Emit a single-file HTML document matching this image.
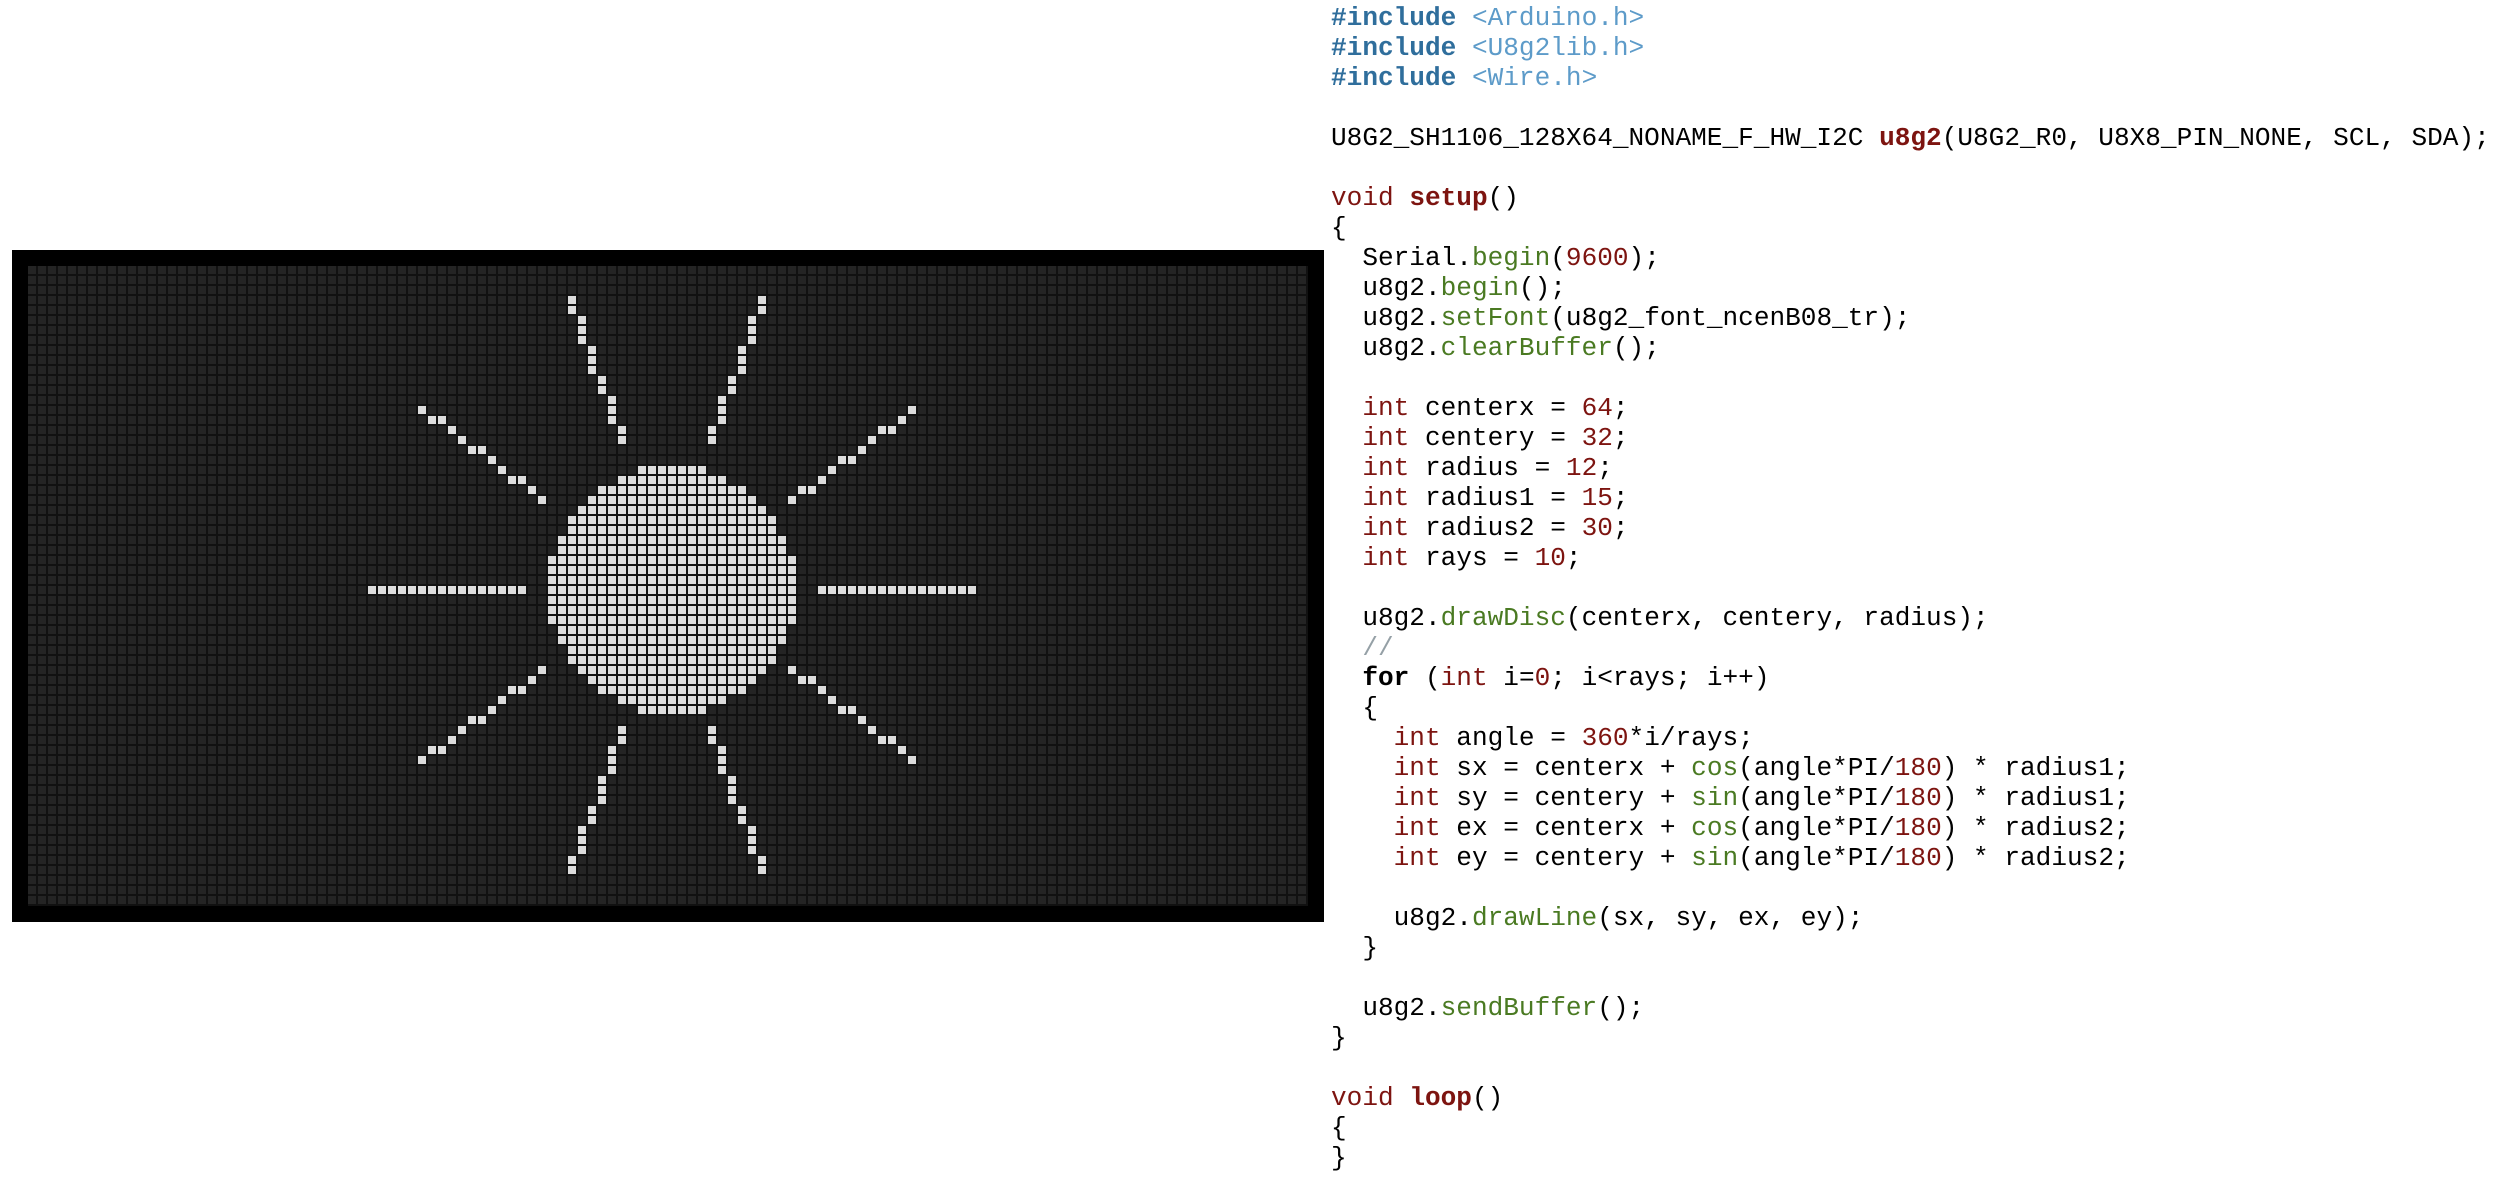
<!DOCTYPE html>
<html><head><meta charset="utf-8">
<style>
html,body{margin:0;padding:0;background:#fff;width:2494px;height:1180px;overflow:hidden;position:relative}
#oled{position:absolute;left:12px;top:250px;width:1312px;height:672px;background:#000}
#grid{position:absolute;left:16px;top:16px;width:1280px;height:640px;
background:linear-gradient(90deg,transparent 8px,#111 8px) 0 0/10px 10px,linear-gradient(transparent 8px,#111 8px) 0 0/10px 10px,#242424;}
#grid i{position:absolute;width:8px;height:8px;background:#dcdcdc}
pre{position:absolute;left:1331px;top:3px;margin:0;font-family:"Liberation Mono",monospace;font-size:26.1px;line-height:30px;color:#000}
.inc{color:#2f6e9c;font-weight:bold}
.str{color:#5d9bc9}
.kw{color:#7d1410}
.kb{color:#7d1410;font-weight:bold}
.fn{color:#4a7a22}
.num{color:#7d1410}
.cm{color:#95a0a6}
b{font-weight:bold}
</style></head><body>
<div id="oled"><div id="grid"></div></div>
<pre><span class="inc">#include</span> <span class="str">&lt;Arduino.h&gt;</span>
<span class="inc">#include</span> <span class="str">&lt;U8g2lib.h&gt;</span>
<span class="inc">#include</span> <span class="str">&lt;Wire.h&gt;</span>

U8G2_SH1106_128X64_NONAME_F_HW_I2C <span class="kb">u8g2</span>(U8G2_R0, U8X8_PIN_NONE, SCL, SDA);

<span class="kw">void</span> <span class="kb">setup</span>()
{
  Serial.<span class="fn">begin</span>(<span class="num">9600</span>);
  u8g2.<span class="fn">begin</span>();
  u8g2.<span class="fn">setFont</span>(u8g2_font_ncenB08_tr);
  u8g2.<span class="fn">clearBuffer</span>();

  <span class="kw">int</span> centerx = <span class="num">64</span>;
  <span class="kw">int</span> centery = <span class="num">32</span>;
  <span class="kw">int</span> radius = <span class="num">12</span>;
  <span class="kw">int</span> radius1 = <span class="num">15</span>;
  <span class="kw">int</span> radius2 = <span class="num">30</span>;
  <span class="kw">int</span> rays = <span class="num">10</span>;

  u8g2.<span class="fn">drawDisc</span>(centerx, centery, radius);
  <span class="cm">//</span>
  <b>for</b> (<span class="kw">int</span> i=<span class="num">0</span>; i&lt;rays; i++)
  {
    <span class="kw">int</span> angle = <span class="num">360</span>*i/rays;
    <span class="kw">int</span> sx = centerx + <span class="fn">cos</span>(angle*PI/<span class="num">180</span>) * radius1;
    <span class="kw">int</span> sy = centery + <span class="fn">sin</span>(angle*PI/<span class="num">180</span>) * radius1;
    <span class="kw">int</span> ex = centerx + <span class="fn">cos</span>(angle*PI/<span class="num">180</span>) * radius2;
    <span class="kw">int</span> ey = centery + <span class="fn">sin</span>(angle*PI/<span class="num">180</span>) * radius2;

    u8g2.<span class="fn">drawLine</span>(sx, sy, ex, ey);
  }

  u8g2.<span class="fn">sendBuffer</span>();
}

<span class="kw">void</span> <span class="kb">loop</span>()
{
}</pre>
<script>
(function(){
var px={};
function P(x,y){if(x<0||x>127||y<0||y>63)return;px[x+','+y]=1;}
function V(x,y,h){for(var k=0;k<h;k++)P(x,y+k);}
function sec(x,y,x0,y0){V(x0+x,y0-y,y+1);V(x0+y,y0-x,x+1);V(x0-x,y0-y,y+1);V(x0-y,y0-x,x+1);
V(x0+x,y0,y+1);V(x0+y,y0,x+1);V(x0-x,y0,y+1);V(x0-y,y0,x+1);}
function disc(x0,y0,r){var f=1-r,ddx=1,ddy=-2*r,x=0,y=r;sec(x,y,x0,y0);
while(x<y){if(f>=0){y--;ddy+=2;f+=ddy;}x++;ddx+=2;f+=ddx;sec(x,y,x0,y0);}}
function line(x1,y1,x2,y2){var t,dx=Math.abs(x2-x1),dy=Math.abs(y2-y1),sw=0;
if(dy>dx){sw=1;t=dx;dx=dy;dy=t;t=x1;x1=y1;y1=t;t=x2;x2=y2;y2=t;}
if(x1>x2){t=x1;x1=x2;x2=t;t=y1;y1=y2;y2=t;}
var err=dx>>1,ys=y2>y1?1:-1,y=y1;
for(var x=x1;x<=x2;x++){if(sw)P(y,x);else P(x,y);err-=dy;if(err<0){y+=ys;err+=dx;}}}
disc(64,32,12);
for(var i=0;i<10;i++){var a=Math.floor(360*i/10),r=a*Math.PI/180;
var sx=Math.trunc(64+Math.cos(r)*15),sy=Math.trunc(32+Math.sin(r)*15),
ex=Math.trunc(64+Math.cos(r)*30),ey=Math.trunc(32+Math.sin(r)*30);line(sx,sy,ex,ey);}
var g=document.getElementById('grid'),h='';
for(var k in px){var p=k.split(',');h+='<i style="left:'+(p[0]*10)+'px;top:'+(p[1]*10)+'px"></i>';}
g.innerHTML=h;
})();
</script>
</body></html>
